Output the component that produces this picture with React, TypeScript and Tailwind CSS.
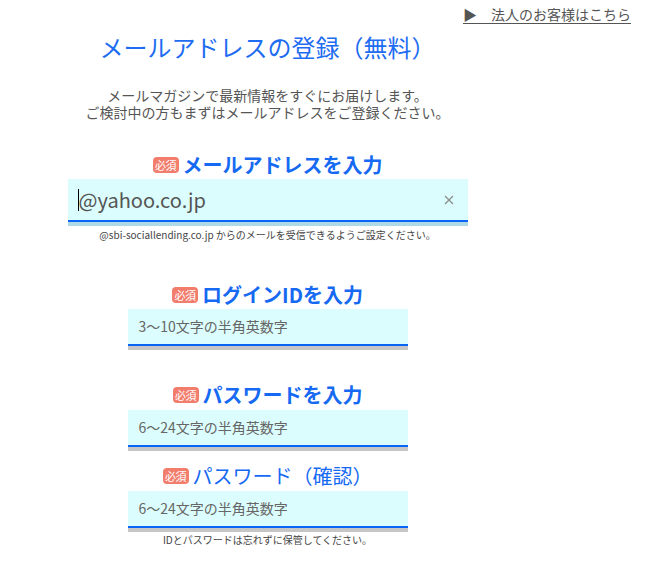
import React from "react";

const font = { fontFamily: '"Noto Sans CJK JP", "Noto Sans", sans-serif' };

function Badge() {
  return (
    <span className="inline-flex items-center justify-center w-[26px] h-[16px] rounded-[4px] bg-[#f27d6d] text-white text-[11px] leading-none mr-[4px] tracking-[-0.5px]">
      必須
    </span>
  );
}

function Heading({ children, bold = true }: { children: React.ReactNode; bold?: boolean }) {
  return (
    <div className="flex items-center justify-center h-[28px]">
      <Badge />
      <span className={`text-[20px] leading-[28px] text-[#1669f2] ${bold ? "font-bold" : "font-normal"}`}>{children}</span>
    </div>
  );
}

function SmallInput({ placeholder }: { placeholder: string }) {
  return (
    <div className="w-[280px]">
      <div className="h-[35px] bg-[#dcfdfd] flex items-center pl-[11px] text-[14px] text-[#666]">{placeholder}</div>
      <div className="h-[2px] bg-[#0a64f5]" />
      <div className="h-[4px] bg-[#c6c6c6]" />
    </div>
  );
}

export default function App() {
  return (
    <div className="w-[665px] h-[583px] bg-white text-[#444]" style={font}>
      <div className="flex justify-end pr-[34px] pt-[5px] h-[23px]">
        <a className="text-[14px] leading-[18px] text-[#555] underline underline-offset-[3px]">▶　法人のお客様はこちら</a>
      </div>
      <div className="w-[535px] flex flex-col items-center">
        <div className="mt-[8px] text-[24px] leading-[32px] text-[#1d6cf2]">メールアドレスの登録（無料）</div>
        <div className="mt-[24px] text-[14px] leading-[17px] text-[#555] text-center">
          <div>メールマガジンで最新情報をすぐにお届けします。</div>
          <div>ご検討中の方もまずはメールアドレスをご登録ください。</div>
        </div>
        <div className="mt-[30px]">
          <Heading>メールアドレスを入力</Heading>
        </div>
        <div className="w-[400px]">
          <div className="h-[41px] bg-[#dcfdfd] flex items-center pl-[10px] pr-[14px]">
            <span className="inline-block w-[1px] h-[22px] bg-black" />
            <span className="text-[20px] text-[#555] leading-none">@yahoo.co.jp</span>
            <span className="ml-auto">
              <svg width="10" height="10" viewBox="0 0 10 10">
                <path d="M1 1 L9 9 M9 1 L1 9" stroke="#8a8a8a" strokeWidth="1.2" />
              </svg>
            </span>
          </div>
          <div className="h-[2px] bg-[#0a64f5]" />
          <div className="h-[4px] bg-[#aed9e6]" />
        </div>
        <div className="mt-[3px] text-[10px] leading-[12px] text-[#444]">
          @sbi-sociallending.co.jp からのメールを受信できるようご設定ください。
        </div>
        <div className="mt-[40px]">
          <Heading>ログインIDを入力</Heading>
        </div>
        <SmallInput placeholder="3〜10文字の半角英数字" />
        <div className="mt-[31px]">
          <Heading>パスワードを入力</Heading>
        </div>
        <div className="mt-[1px]">
          <SmallInput placeholder="6〜24文字の半角英数字" />
        </div>
        <div className="mt-[11px]">
          <Heading bold={false}>パスワード（確認）</Heading>
        </div>
        <div className="mt-[1px]">
          <SmallInput placeholder="6〜24文字の半角英数字" />
        </div>
        <div className="mt-[2px] text-[10px] leading-[12px] text-[#444]">IDとパスワードは忘れずに保管してください。</div>
      </div>
    </div>
  );
}
